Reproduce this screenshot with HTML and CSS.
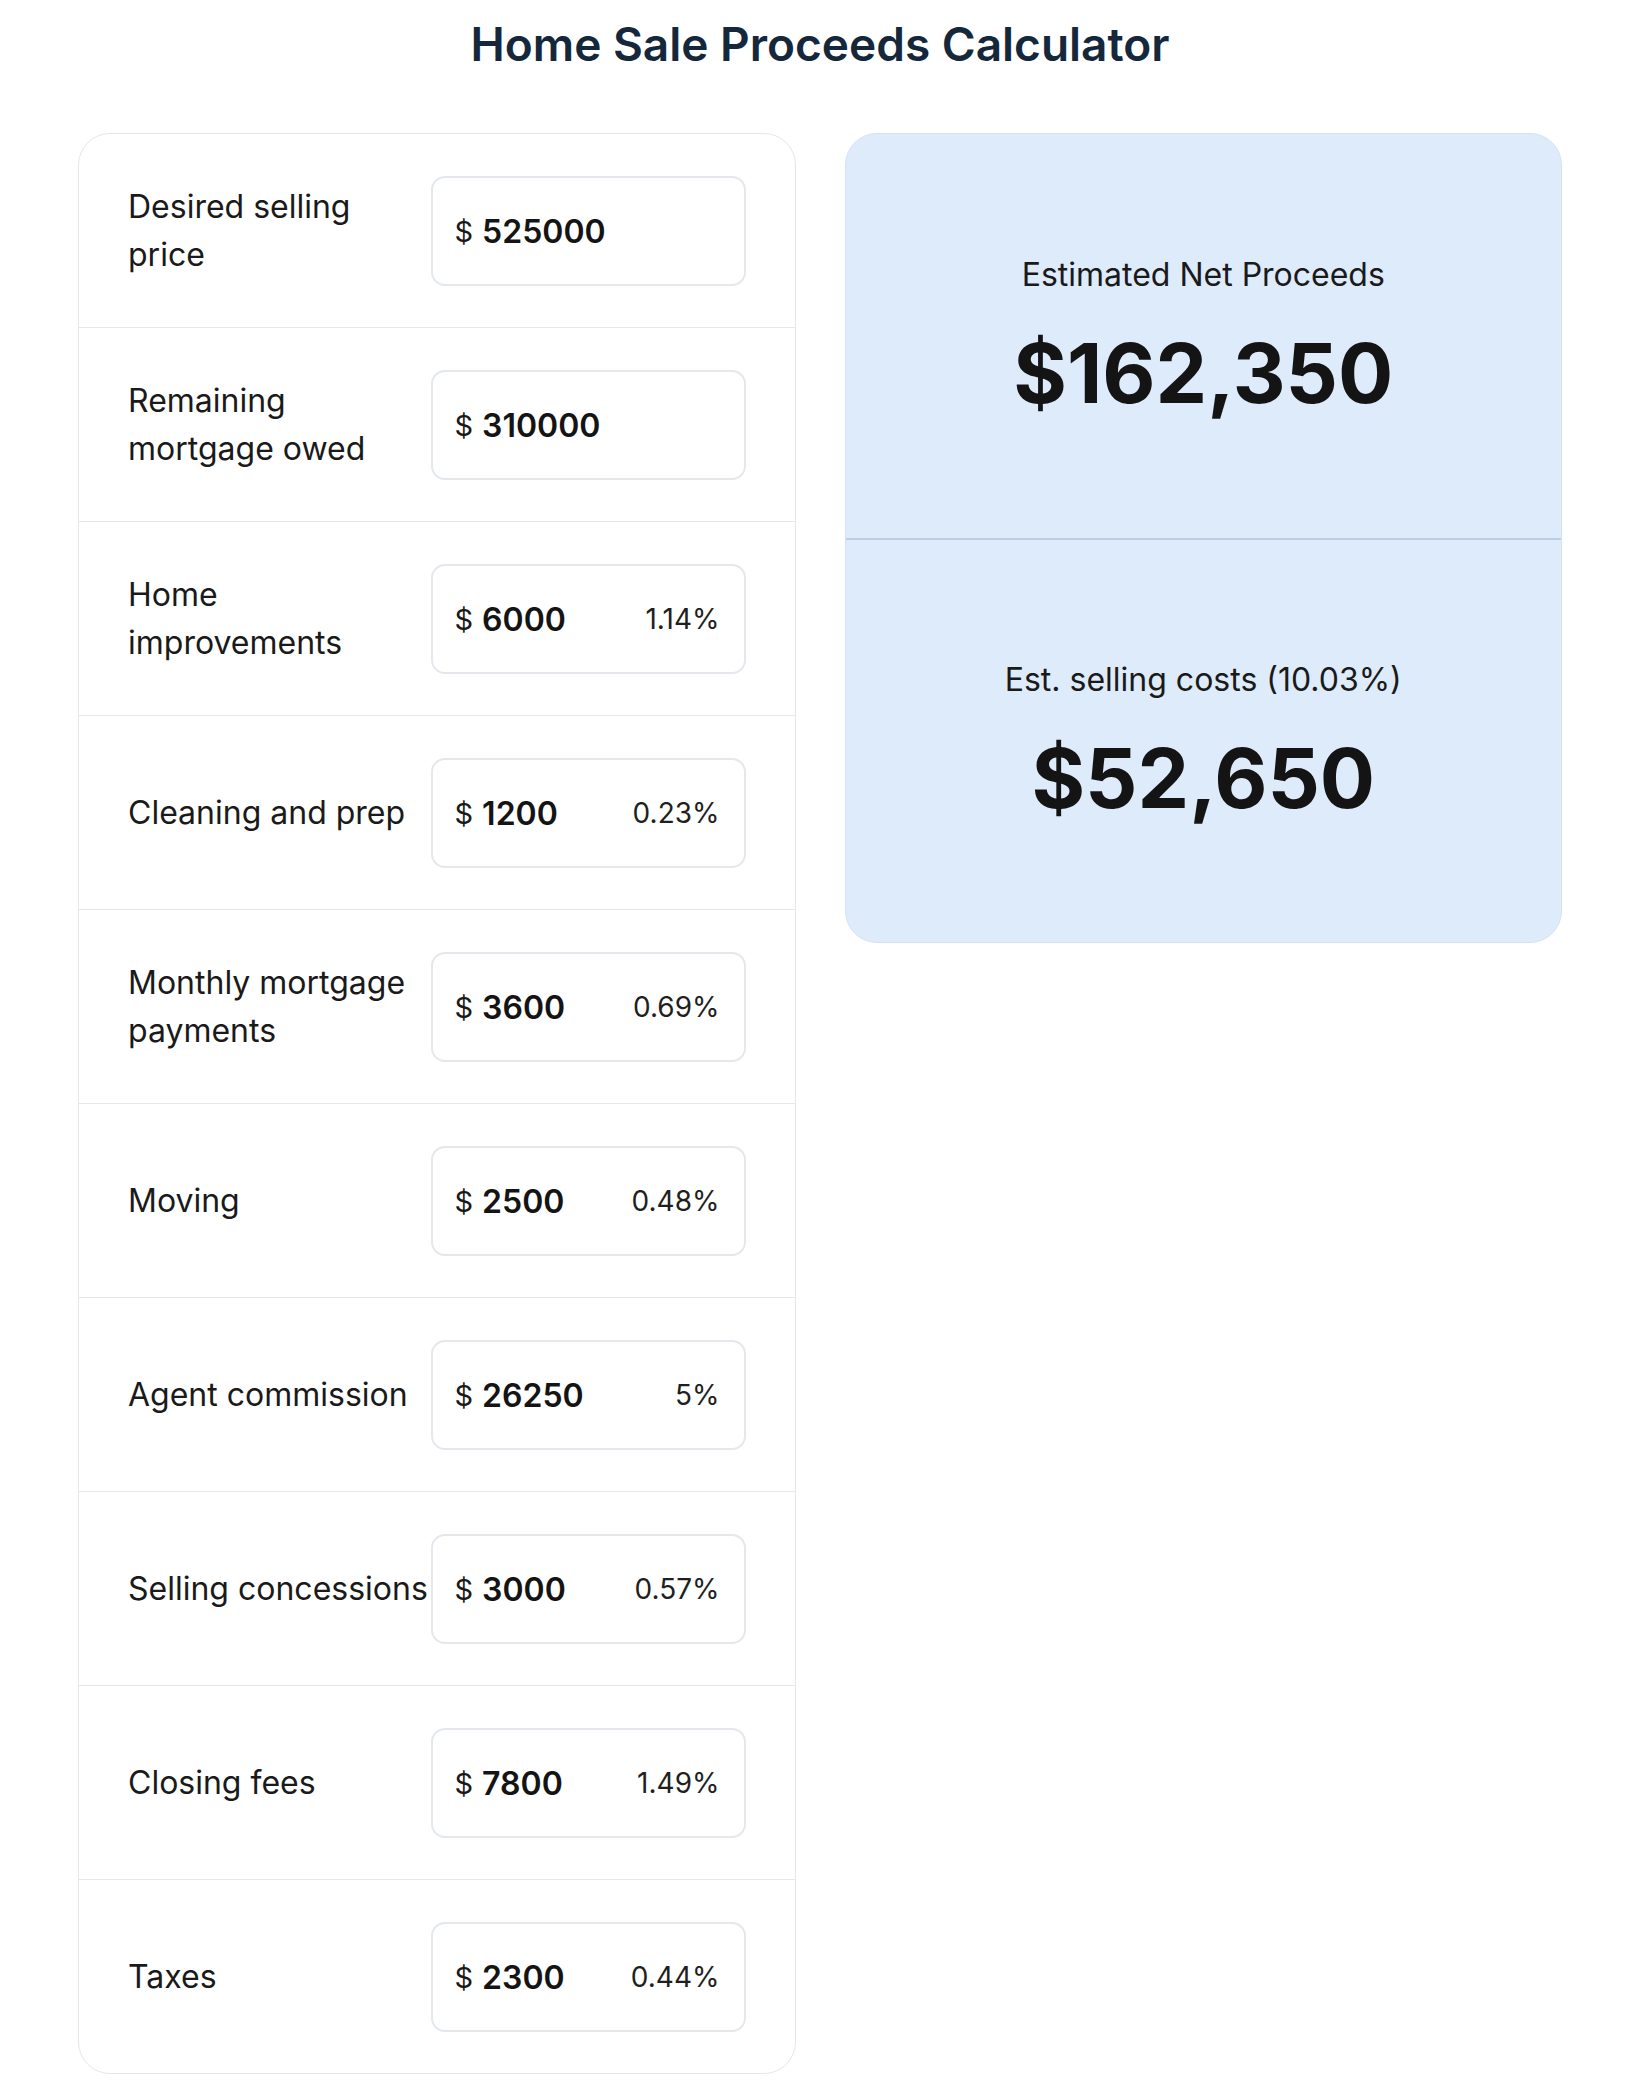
FILE: index.html
```html
<!DOCTYPE html>
<html lang="en">
<head>
<meta charset="utf-8">
<title>Home Sale Proceeds Calculator</title>
<link rel="stylesheet" href="styles.css">
</head>
<body>
<main class="page">
  <h1 class="title">Home Sale Proceeds Calculator</h1>
  <div class="layout">
    <section class="inputs">
      <div class="row">
        <div class="label">Desired selling price</div>
        <div class="field"><span class="cur">$</span><span class="amt">525000</span></div>
      </div>
      <div class="row">
        <div class="label">Remaining mortgage owed</div>
        <div class="field"><span class="cur">$</span><span class="amt">310000</span></div>
      </div>
      <div class="row">
        <div class="label">Home improvements</div>
        <div class="field"><span class="cur">$</span><span class="amt">6000</span><span class="pct">1.14%</span></div>
      </div>
      <div class="row">
        <div class="label">Cleaning and prep</div>
        <div class="field"><span class="cur">$</span><span class="amt">1200</span><span class="pct">0.23%</span></div>
      </div>
      <div class="row">
        <div class="label">Monthly mortgage payments</div>
        <div class="field"><span class="cur">$</span><span class="amt">3600</span><span class="pct">0.69%</span></div>
      </div>
      <div class="row">
        <div class="label">Moving</div>
        <div class="field"><span class="cur">$</span><span class="amt">2500</span><span class="pct">0.48%</span></div>
      </div>
      <div class="row">
        <div class="label">Agent commission</div>
        <div class="field"><span class="cur">$</span><span class="amt">26250</span><span class="pct">5%</span></div>
      </div>
      <div class="row">
        <div class="label">Selling concessions</div>
        <div class="field"><span class="cur">$</span><span class="amt">3000</span><span class="pct">0.57%</span></div>
      </div>
      <div class="row">
        <div class="label">Closing fees</div>
        <div class="field"><span class="cur">$</span><span class="amt">7800</span><span class="pct">1.49%</span></div>
      </div>
      <div class="row">
        <div class="label">Taxes</div>
        <div class="field"><span class="cur">$</span><span class="amt">2300</span><span class="pct">0.44%</span></div>
      </div>
    </section>
    <section class="results">
      <div class="result">
        <div class="result-label">Estimated Net Proceeds</div>
        <div class="result-value">$162,350</div>
      </div>
      <div class="result">
        <div class="result-label">Est. selling costs (10.03%)</div>
        <div class="result-value">$52,650</div>
      </div>
    </section>
  </div>
</main>
</body>
</html>
```
FILE: styles.css
```css
* {
  box-sizing: border-box;
}

html, body {
  margin: 0;
  padding: 0;
  background: #ffffff;
}

body {
  font-family: Inter, "Noto Sans", "Liberation Sans", sans-serif;
  color: #1a1a1a;
}

.page {
  width: 1484px;
  margin: 0 auto;
  padding-top: 16px;
}

.title {
  margin: 0 0 61px;
  text-align: center;
  font-size: 46px;
  line-height: 56px;
  font-weight: 600;
  color: #15283b;
}

.layout {
  display: grid;
  grid-template-columns: 1fr 1fr;
  column-gap: 49px;
  align-items: start;
}

.inputs {
  border: 1px solid #e3e7eb;
  border-radius: 32px;
  background: #ffffff;
  overflow: hidden;
}

.row {
  display: flex;
  align-items: center;
  padding: 42px 49px 41px 49px;
  border-bottom: 1px solid #e3e8ed;
}

.row:last-child {
  border-bottom: none;
}

.label {
  flex: 1;
  min-width: 0;
  font-size: 32px;
  line-height: 48px;
  color: #1a1a1a;
}

.field {
  width: 315px;
  height: 110px;
  flex: none;
  display: flex;
  align-items: center;
  padding: 0 24px 0 22px;
  border: 2px solid #e4e8ed;
  border-radius: 14px;
  background: #ffffff;
}

.cur {
  font-size: 29px;
  color: #1a1a1a;
  margin-right: 9px;
}

.amt {
  font-size: 32px;
  font-weight: 600;
  color: #141414;
}

.pct {
  margin-left: auto;
  font-size: 28px;
  color: #1f1f1f;
}

.results {
  display: flex;
  flex-direction: column;
  border: 1px solid #d4e2f4;
  border-radius: 32px;
  background: #deebfb;
  overflow: hidden;
}

.result {
  height: 404px;
  display: flex;
  flex-direction: column;
  align-items: center;
  justify-content: center;
}

.result + .result {
  border-top: 2px solid #bccfe4;
}

.result-label {
  font-size: 32px;
  line-height: 48px;
  color: #1a1a1a;
}

.result-value {
  margin-top: 27px;
  font-size: 82px;
  line-height: 96px;
  font-weight: 700;
  color: #141414;
}
```
